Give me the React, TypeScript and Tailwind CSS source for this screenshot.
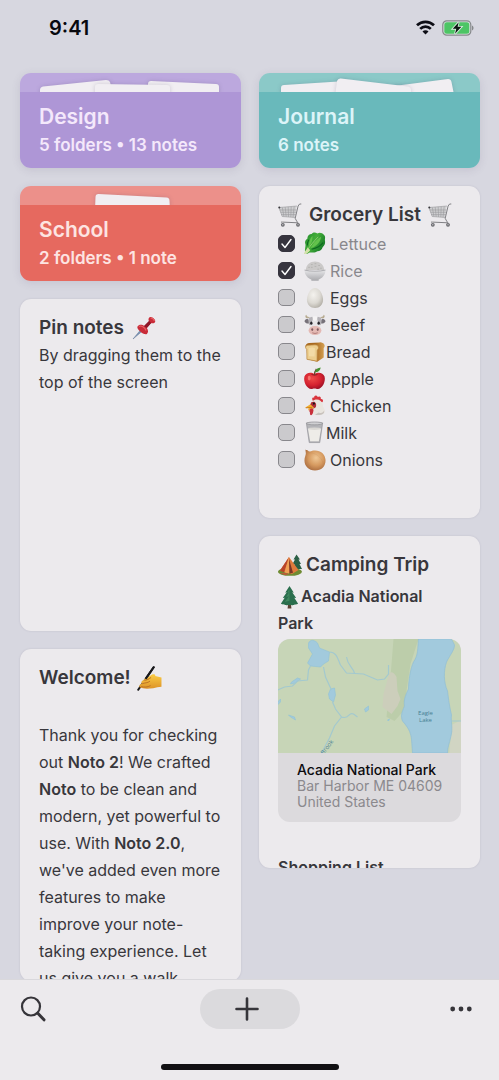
import type { ReactNode } from "react";

/* ---------- Emoji drawings ---------- */

function Glyph({ label, className, children }: { label: string; className: string; children: ReactNode }) {
  return (
    <svg viewBox="0 0 24 24" role="img" aria-label={label} className={`shrink-0 ${className}`}>
      {children}
    </svg>
  );
}

function Cart() {
  return (
    <Glyph label="Shopping cart" className="size-6">
      <path d="M1 4.5 18.6 3 17 14.5 4.2 13.5Z" fill="#cfcfd1" />
      <path
        d="M1 4.5 19 3M1.5 7h17M2.4 9.3h15.8M3 11.6h14.8M1 4.5l3.2 9 12.8 1M4.3 4.4l1.6 9M7.2 4.1l1 9.6M10.2 3.9l.3 10M13.2 3.6l-.4 10.4M16.2 3.3 15 14.3"
        fill="none"
        stroke="#99999c"
        strokeWidth=".6"
      />
      <path d="M23.3 1h-1.7l-1.5 2-2.9 12.3 1.4 2.7 1.4 1.800-15.500-.700H3" fill="none" stroke="#808084" strokeWidth="1" />
      <circle cx="4.8" cy="21.800" r="1.900" fill="#68686d" />
      <circle cx="20" cy="21.800" r="1.900" fill="#68686d" />
      <circle cx="4.8" cy="21.800" r=".7" fill="#c7c7ca" />
      <circle cx="20" cy="21.800" r=".7" fill="#c7c7ca" />
      <circle cx="1.300" cy="4.500" r="1" fill="#37373b" />
    </Glyph>
  );
}

function Lettuce() {
  return (
    <Glyph label="Lettuce" className="size-[23px]">
      <defs>
        <linearGradient id="leafShade" x1="0" x2="1" y1="0" y2=".6">
          <stop stopColor="#1f8a2c" />
          <stop offset=".5" stopColor="#45ae3a" />
          <stop offset="1" stopColor="#167a28" />
        </linearGradient>
      </defs>
      <path
        d="M2 20c0-3 .8-5 .6-7C1.500 10.500 2.500 8 4.500 7c0-3 2-5 4.500-5 2-2 4-1.500 6-.5 2.500-1.500 5-.5 7 1.500 2 2 .5 4 1 6.500.5 3-1 5-2.500 6.500-.8 3-3 4-5.500 4-2.500 2-6 1-8 1.500l-3 1.500Z"
        fill="url(#leafShade)"
      />
      <path d="M6 16c0-5 1-9 4-12 0 5-1 8-4 12ZM8 17c3-6 6-9 11-12-1 6-5 10-11 12Z" fill="#63c24c" />
      <path d="M9 18c4-1 9-3 12-7M4.500 14c0-2 .5-4 1.500-6" stroke="#0f6a20" strokeWidth="1.200" fill="none" />
      <path d="M1 22.500c1-2 2.500-4 4-6.500l2.500 3c-1.500 2-4 4-6 4Z" fill="#d3e0a8" />
      <path d="M5 18C8 14 11 10 16 5" stroke="#a6d880" strokeWidth=".8" fill="none" />
    </Glyph>
  );
}

function Rice() {
  return (
    <Glyph label="Rice" className="size-[22px]">
      <defs>
        <linearGradient id="bowlShade" y1="0" y2="1" x1="0" x2="0">
          <stop stopColor="#e6e6e8" />
          <stop offset="1" stopColor="#a9a9ad" />
        </linearGradient>
      </defs>
      <path d="M2 11C2 5 7 1.500 12 1.500S22 5 22 11Z" fill="#cbc9c8" />
      <path d="M5 8h1m2-3h1m3-1h1m3 2h1m1 3h1M8 8h1m3-1h1m2 3h1" stroke="#b4b2b0" strokeWidth="1" strokeLinecap="round" />
      <path d="M.6 11c6 1.600 16.800 1.600 22.800 0 0 6-4 9-7.400 10.300v1.200H8v-1.200C4.500 20 .6 17 .6 11Z" fill="url(#bowlShade)" />
      <path d="M.6 11c6 1.600 16.800 1.600 22.800 0" fill="none" stroke="#98989c" strokeWidth=".8" />
    </Glyph>
  );
}

function Egg() {
  return (
    <Glyph label="Egg" className="size-[22px]">
      <defs>
        <radialGradient id="eggShade" cx=".4" cy=".35" r=".7">
          <stop stopColor="#f4f2ee" />
          <stop offset=".6" stopColor="#dcd9d3" />
          <stop offset="1" stopColor="#b3afa7" />
        </radialGradient>
      </defs>
      <path d="M12 1c4.800 0 8.800 7 8.800 12.800 0 5.200-3.800 9-8.800 9s-8.800-3.800-8.800-9C3.200 8 7.200 1 12 1Z" fill="url(#eggShade)" />
    </Glyph>
  );
}

function Cow() {
  return (
    <Glyph label="Cow" className="size-[22px]">
      <path d="M3.500 5C1 4 1 1.500 2.500.7 3 3 5 3 7 3.500ZM20.500 5c2.500-1 2.500-3.500 1-4.300C21 3 19 3 17 3.500Z" fill="#b7ab91" />
      <path d="M6 7C3 4 1 6 .5 8c1 2.500 4 3 6 2ZM18 7c3-3 5-1 5.500 1-1 2.500-4 3-6 2Z" fill="#77727a" />
      <path d="M5 5c3-3 11-3 14 0l-.5 8-2 9h-9l-2-9Z" fill="#e8e6e8" />
      <path d="M5 5c2-2 4-2 5-2-1 5-1 9-4.500 9ZM19 5c-2-2-4-2-5-2 1 5 1 9 4.500 9Z" fill="#b5b2b7" />
      <path d="M9 2.500h6l-1 4-2 1-2-1Z" fill="#f5f3f4" />
      <ellipse cx="8" cy="10" rx="1.300" ry="1.700" fill="#252329" />
      <ellipse cx="16" cy="10" rx="1.300" ry="1.700" fill="#252329" />
      <ellipse cx="12" cy="18" rx="7" ry="5" fill="#e4b9b4" />
      <ellipse cx="9" cy="17" rx="1.100" ry="1.500" fill="#805b5e" />
      <ellipse cx="15" cy="17" rx="1.100" ry="1.500" fill="#805b5e" />
      <path d="M9 20.500q3 1.500 6 0" stroke="#ae7775" fill="none" />
    </Glyph>
  );
}

function Bread() {
  return (
    <Glyph label="Bread" className="size-[22px]">
      <defs>
        <linearGradient id="crustShade" x1="0" x2="1">
          <stop offset=".5" stopColor="#a8691f" />
          <stop offset="1" stopColor="#d6a355" />
        </linearGradient>
      </defs>
      <path d="M3 8C0 6 2 2.700 5.500 2.200L17 1.500c5-.3 7 4.200 4.500 6.200V18l-7 4.500L3.500 20Z" fill="url(#crustShade)" />
      <path d="M3 9C.5 7 2 4.600 5 4.600l7-.4c4 0 5 4 2.400 5.800l-.2 12-11-2Z" fill="#ecce8f" stroke="#bd8a45" strokeWidth=".8" />
      <path d="M5 8q4-2 7 0l-.5 9-6-.5Z" fill="#f3dba6" />
    </Glyph>
  );
}

function Apple() {
  return (
    <Glyph label="Apple" className="size-[23px]">
      <defs>
        <radialGradient id="appleShade" cx=".4" cy=".35" r=".7">
          <stop stopColor="#ef4b48" />
          <stop offset=".6" stopColor="#d52230" />
          <stop offset="1" stopColor="#990f25" />
        </radialGradient>
      </defs>
      <path d="M12 7.500C15 5 21 5.500 22.500 10c1.500 6-3 13-7 13-1.500 0-2-.5-3.500-.5s-2 .5-3.500.5c-4 0-8.500-7-7-13C3 5.500 9 5 12 7.500Z" fill="url(#appleShade)" />
      <path d="M8 8q4 1.500 8 0-2.500-1-4 0-1.500-1-4 0Z" fill="#8b1020" />
      <path d="M12 8.500c0-3 .5-4.500 2-6.500" stroke="#68452b" strokeWidth="1.300" fill="none" />
      <path d="M12.500 5.500C13 2 16 .8 18.500.5 18 4 15.500 5.700 12.500 5.500Z" fill="#439332" />
      <ellipse cx="6.500" cy="11.500" rx="1.500" ry="2.500" fill="#ff9186" opacity=".65" />
    </Glyph>
  );
}

function Chicken() {
  return (
    <Glyph label="Chicken" className="size-[22px]">
      <path d="M10 7C8 4 9 2 11 3c0-3 3-3 4-.7 2-1.700 4 .2 3.300 2 2.500-.3 3.200 2 1.700 3.700Z" fill="#d9343d" />
      <path d="M9 7c4-4 10-2 11.500 3-.5 4 4 6 1.500 10-4 3-9 2-13 1L6 12Z" fill="#e9e5df" />
      <path d="M16 19c3 1.500 5 0 6-2 .5 5-5 5.500-10 4.500Z" fill="#c9c2bd" />
      <path d="M8 8c4-2 6 1 5 5-3 3-6 2-7-1Z" fill="#ad2d38" />
      <path d="m7 10-6 4 4 .3L4.500 17 11 14Z" fill="#f1ae2d" />
      <path d="m2 14 7-.5" stroke="#c67b20" />
      <circle cx="10.800" cy="9.300" r="1.200" fill="#17151a" />
      <path d="M7 15c3-1 4 1 3 3.500-.5 4-4 5-3.500.5-1-1-1-3 .5-4Z" fill="#c82f3b" />
    </Glyph>
  );
}

function Milk() {
  return (
    <Glyph label="Milk" className="size-[23px]">
      <path d="M3.500 2h17l-3 20.500h-11Z" fill="#b4b4b8" stroke="#929297" strokeWidth=".7" />
      <path d="M5.200 8h13.600l-2.300 13h-9Z" fill="#eeece8" />
      <ellipse cx="12" cy="2.500" rx="8.300" ry="1.500" fill="#cfcfd2" stroke="#8d8d92" strokeWidth=".7" />
      <ellipse cx="12" cy="8" rx="6.800" ry="1.300" fill="#dad8d4" />
    </Glyph>
  );
}

function Onion() {
  return (
    <Glyph label="Onion" className="size-[22px]">
      <defs>
        <radialGradient id="onionShade" cx=".55" cy=".4" r=".65">
          <stop stopColor="#efc795" />
          <stop offset=".55" stopColor="#d69a60" />
          <stop offset="1" stopColor="#a86a3e" />
        </radialGradient>
      </defs>
      <path d="M1.500.5c1 1 2 0 2.500 1 1.500 1.500 3 1.300 5 .5 8-1.500 14 3 14.500 10 .3 7-4.500 11.500-11.500 11.500C5 23.500.5 18.500.5 12.500c0-4 1.500-5.500 1.500-8Z" fill="url(#onionShade)" />
      <path d="M3.500 4c-2 6 0 12 5 17M5 4c7 0 14 4 16 12" fill="none" stroke="#b97f4c" strokeWidth=".4" opacity=".5" />
    </Glyph>
  );
}

function Pushpin() {
  return (
    <Glyph label="Pushpin" className="size-6">
      <path d="m1 23 7.500-9 1.600 1.300Z" fill="#7b93b5" stroke="#627899" strokeWidth=".5" />
      <path d="M5.500 10.500c1.500-2.500 4.800-2 6.800-.6L17 5.300c-1-1.600-.5-3.500 1-4.200 2-1 6 2.800 5.200 4.600-.7 1.600-2.600 2-4.200 1.200L14.800 12c1.700 2.300 1.700 5-.3 6.200-2.500 1.200-10.500-5-9-7.700Z" fill="#c92b38" />
      <path d="m12 10 5-5 2.300 2-4.500 5Z" fill="#8e1728" />
      <path d="M7 10.500c2-1.500 6 1 7 4M18.500 2c2 0 3.500 1.500 4 3" stroke="#e55f63" strokeWidth="1.200" fill="none" />
    </Glyph>
  );
}

function WritingHand() {
  return (
    <Glyph label="Writing hand" className="size-[25px]">
      <defs>
        <linearGradient id="handShade" x1="0" x2="0" y1="0" y2="1">
          <stop stopColor="#fbcd45" />
          <stop offset="1" stopColor="#dd9429" />
        </linearGradient>
      </defs>
      <path d="M16 1.200 1.200 22.800" stroke="#19191c" strokeWidth="2" strokeLinecap="round" />
      <path
        d="M2.500 20.500c-1-2 .5-3.200 2-3.500-1-2 .5-3 2-3.500C7 12 9 11 10.500 10.800l4-2.600c1.500-.8 3.500-.2 3 1.300l6 1.500v9c-3 0-5 1-8 1.300-5 .7-10 .7-13-.8Z"
        fill="url(#handShade)"
      />
      <path d="M5 17c2.500-1 5-.5 7.500-2.500M7 13.700c2.500 0 4.500-1.200 6.500-2.700M4 19.800c3 .7 6 .7 9-1" fill="none" stroke="#b96e22" strokeWidth=".9" />
      <path d="M16 1.200 8.800 11.700" stroke="#19191c" strokeWidth="2" strokeLinecap="round" />
    </Glyph>
  );
}

function Tent() {
  return (
    <Glyph label="Camping" className="size-6">
      <path d="m18.500 1.500-3 5h1.500l-2.500 4.500h2L14 16h10l-2.500-5h1.500l-2.500-4.500H22Z" fill="#2b5f45" />
      <ellipse cx="12" cy="18.800" rx="12" ry="4" fill="#6f8b33" />
      <path d="M2 17.500 11 4l9.500 13-6.500 4Z" fill="#e07a3c" />
      <path d="m11 4-9 13.500 4 2Z" fill="#b8442c" />
      <path d="m11 4-4.500 15.500 4.500 1Z" fill="#f0a055" />
      <path d="m11 6 .5 14.500 3.500-.8Z" fill="#7a3627" />
      <path d="m2 20 5 2 4-.8-2.500-1Z" fill="#c9523a" />
    </Glyph>
  );
}

function Pine() {
  return (
    <Glyph label="Evergreen tree" className="size-[23px]">
      <path d="M10.500 19h3l.5 4.500h-4Z" fill="#5b4333" />
      <path d="m12 0-4.500 7 1.700-.4-4.200 6 2-.4L3 18.500c2 1.300 3 .3 4.500 1.300 1.800.6 3-.8 4.500.4 1.500-1.200 2.700.2 4.500-.4 1.500-1 2.500 0 4.500-1.300l-4-6.300 2 .4-4.200-6 1.700.4Z" fill="#2a6e4d" />
      <path d="M12 3 9.500 7l2-.5-3 5 3-.7-4.500 6 5-1.300Z" fill="#40875f" />
    </Glyph>
  );
}

/* ---------- Folders ---------- */

const PAPER = "fill-[#f1eef2] drop-shadow-[0_0_2px_rgba(60,50,90,0.2)]";

type FolderProps = {
  name: string;
  detail: string;
  tab: string;
  body: string;
  papers: string[];
};

function Folder({ name, detail, tab, body, papers }: FolderProps) {
  return (
    <a href="#folder" className="block overflow-hidden rounded-[11px] shadow-[0_2px_8px_rgba(90,80,110,0.14)]">
      <div className={tab}>
        <svg viewBox="0 0 221 19" className="block h-[19px] w-full" aria-hidden="true">
          {papers.map((d) => (
            <path key={d} d={d} className={PAPER} />
          ))}
        </svg>
      </div>
      <div className={`h-[76px] px-[19px] pt-[11px] ${body}`}>
        <h2 className="text-[21px] leading-7 font-semibold">{name}</h2>
        <p className="text-[17px] leading-7 font-semibold whitespace-nowrap">{detail}</p>
      </div>
    </a>
  );
}

/* ---------- Notes ---------- */

function Note({ children }: { children: ReactNode }) {
  return (
    <article className="h-[332px] shrink-0 overflow-hidden rounded-[11px] bg-[#eceaed] px-[19px] pt-[15px] shadow-[0_0_2px_rgba(90,80,110,0.2)]">
      {children}
    </article>
  );
}

const groceries = [
  { name: "Lettuce", icon: <Lettuce />, done: true, near: false },
  { name: "Rice", icon: <Rice />, done: true, near: false },
  { name: "Eggs", icon: <Egg />, done: false, near: false },
  { name: "Beef", icon: <Cow />, done: false, near: false },
  { name: "Bread", icon: <Bread />, done: false, near: true },
  { name: "Apple", icon: <Apple />, done: false, near: false },
  { name: "Chicken", icon: <Chicken />, done: false, near: false },
  { name: "Milk", icon: <Milk />, done: false, near: true },
  { name: "Onions", icon: <Onion />, done: false, near: false },
];

function GroceryRow({ item }: { item: (typeof groceries)[number] }) {
  return (
    <li>
      <label className={`flex h-[27px] items-center ${item.done ? "text-[#88878c]" : ""}`}>
        <span className="relative flex size-[17px] shrink-0">
          <input
            type="checkbox"
            defaultChecked={item.done}
            className="peer size-[17px] appearance-none rounded-[5px] border border-[#88878c] bg-[#cbcacd] checked:border-[#36343e] checked:bg-[#36343e]"
          />
          <svg
            viewBox="0 0 17 17"
            className="pointer-events-none absolute inset-0 hidden size-[17px] peer-checked:block"
            aria-hidden="true"
          >
            <path d="m4 9 3 3.500 6-8" fill="none" stroke="#fff" strokeWidth="1.400" strokeLinecap="round" strokeLinejoin="round" />
          </svg>
        </span>
        <span className="ml-2 flex w-[23px] justify-center">{item.icon}</span>
        <span className={item.near ? "" : "ml-1"}>{item.name}</span>
      </label>
    </li>
  );
}

function ParkMap() {
  return (
    <svg
      viewBox="0 0 184 114"
      preserveAspectRatio="xMidYMid slice"
      className="block h-[114px] w-full"
      role="img"
      aria-label="Map of Acadia National Park"
    >
      <path fill="#c7d5b7" d="M0 0h184v114H0z" />
      <path fill="#bccdaa" d="M116 0h25l-8 25-7 47-9 10-8-4 4-40Z" />
      <path fill="#cccebb" d="M112 34c2-2 5 0 7 4l1 14 3 8-3 7-6 8-5-4-4-3 1-13 3-11Z" />
      <path fill="#d1d5c3" d="m174 86 10-5v33h-12Z" />
      <path
        fill="#a2cadd"
        stroke="#91bed5"
        strokeWidth=".7"
        d="M141 0c-1 9 0 16-5 23-3 6-5 19-5 27-3 6-5 11-4 17-3 7-4 10-2 15 5 6 8 10 9 18l1 14h35c0-6 2-10 3-15 3-10 0-17 1-23-2-8-3-16-4-24-4-9-4-20-1-29 4-8 8-12 8-17l-3-6Z"
      />
      <path
        fill="#a2cadd"
        stroke="#91c2d7"
        strokeWidth=".6"
        d="M31 4c2-4 6-3 9 0l2 5 10 4-1 9-5 3-3 3-10-1-3-3 5-9-4-6ZM53 50l4-1 1 7-2 7-4-3-1-5ZM14 43l6-4 3 1-5 4-5 1ZM0 66l3-3v-3l-3 3ZM11 76l6 2 1 3-5-3ZM87 70l4-3v4l-3 2ZM110 81l2-1-1 2Z"
      />
      <path
        fill="none"
        stroke="#a3c9cf"
        strokeWidth="1.200"
        d="m0 51 7-3 8-1 5-5 10-1 1-10 2-4M46 28l2 10 6 13m1 12 3 7 6 8-7 9-5 12-8 15M64 78c8 3 7-6 12-3l4 3M52 13c7 0 8 6 11 13l6 8 17 1 14 6 7-1 4-5V26M69 18c1 8 6 10 8 16M174 82h10"
      />
      <g fontFamily="Open Sans, sans-serif" fill="#477f93">
        <text x="148" y="76" fontSize="6" textAnchor="middle">
          Eagle
        </text>
        <text x="148" y="83" fontSize="6" textAnchor="middle">
          Lake
        </text>
        <text x="46" y="116" fontSize="6" transform="rotate(-52 46 116)">
          Brook
        </text>
      </g>
    </svg>
  );
}

/* ---------- Bars ---------- */

function StatusBar() {
  return (
    <header className="flex h-[55px] shrink-0 items-center justify-between pr-[25px] pl-[49px]">
      <time className="text-[20px] leading-6 font-semibold text-[#08080e]">9:41</time>
      <div className="flex items-center gap-[7px]">
        <svg viewBox="0 0 19 15" className="h-[15px] w-[19px]" role="img" aria-label="Wi-Fi">
          <g fill="none" stroke="#0d0d15" strokeWidth="2.700">
            <path d="M1 5.300c4.800-4.700 12.200-4.700 17 0M4.200 8.900c3-3 7.600-3 10.600 0" />
          </g>
          <path d="m9.500 14.500-3-3c1.600-1.700 4.400-1.700 6 0Z" fill="#0d0d15" />
        </svg>
        <svg viewBox="0 0 32 16" className="h-4 w-8" role="img" aria-label="Battery charging">
          <rect x=".8" y=".8" width="28" height="14.400" rx="4" fill="#dde3e2" stroke="#85888a" strokeWidth="1.200" />
          <rect x="2.300" y="2.300" width="25" height="11.400" rx="2.500" fill="#4dc565" />
          <path d="M30 5.500c2 .8 2 4.200 0 5Z" fill="#85888a" />
          <path
            d="m16.700 2.200-6 6.600h3.600l-1.300 5 6.400-7h-3.800Z"
            fill="#0b1711"
            stroke="#d9ecdf"
            strokeWidth="1.800"
            paintOrder="stroke"
          />
        </svg>
      </div>
    </header>
  );
}

function Toolbar() {
  return (
    <footer className="flex h-[101px] shrink-0 flex-col items-center justify-between border-t border-[#d9d8dc] bg-[#eceaed] pt-[9px] pb-[10px] text-[#36353a]">
      <nav aria-label="Notes" className="grid w-full grid-cols-3 items-center px-5">
        <button type="button" aria-label="Search" className="justify-self-start">
          <svg viewBox="0 0 26 26" className="size-[26px]" fill="none" stroke="currentColor" strokeLinecap="round">
            <circle cx="11" cy="10.500" r="9" strokeWidth="2.200" />
            <path d="m17.800 17.300 6.200 6.500" strokeWidth="3" />
          </svg>
        </button>
        <button
          type="button"
          aria-label="New note"
          className="flex h-10 w-[100px] items-center justify-center justify-self-center rounded-full bg-[#dbdadd] pr-[6px]"
        >
          <svg viewBox="0 0 24 24" className="size-6" fill="none" stroke="currentColor" strokeWidth="2.600" strokeLinecap="round">
            <path d="M12 1.500v21M1.500 12h21" />
          </svg>
        </button>
        <button type="button" aria-label="More" className="mr-[7px] justify-self-end">
          <svg viewBox="0 0 22 6" className="h-[6px] w-[22px]" fill="currentColor">
            <circle cx="2.700" cy="3" r="2.400" />
            <circle cx="11" cy="3" r="2.400" />
            <circle cx="19.300" cy="3" r="2.400" />
          </svg>
        </button>
      </nav>
      <div className="h-[6px] w-[178px] rounded-full bg-[#111013]" />
    </footer>
  );
}

export default function App() {
  return (
    <div className="flex h-screen flex-col bg-[#d7d7e0] font-['Inter','Liberation_Sans',sans-serif] text-[#38373c]">
      <StatusBar />
      <main className="grid min-h-0 flex-1 grid-cols-2 items-start gap-[18px] overflow-y-auto pt-[18px] pr-[19px] pl-5 [scrollbar-width:none]">
        <div className="flex min-w-0 flex-col gap-[18px]">
          <Folder
            name="Design"
            detail="5 folders • 13 notes"
            tab="bg-[#bca8de]"
            body="bg-[#ae96d6] text-[#f4e8fb]"
            papers={[
              "M20 24V17q0-3 3-3.500L86 7q3 0 4 2l4 15Z",
              "M128 24V11q0-3 3-3l65 3q3 0 3 3v10Z",
              "M75 24V14q0-3 3-3l69 1q3 0 3 3v9Z",
            ]}
          />
          <Folder
            name="School"
            detail="2 folders • 1 note"
            tab="bg-[#ec908a]"
            body="bg-[#e6695f] text-[#fde4e2]"
            papers={["M75 24 75.500 11q0-3 3-3l68 3.500q3 0 3 3.500l.5 9Z"]}
          />
          <Note>
            <h2 className="flex items-center gap-2 text-[19px] leading-7 font-semibold">
              Pin notes <Pushpin />
            </h2>
            <p className="text-base leading-[27px]">By dragging them to the top of the screen</p>
          </Note>
          <Note>
            <h2 className="flex items-center gap-[6px] text-[19px] leading-7 font-semibold">
              Welcome! <WritingHand />
            </h2>
            <p className="mt-[30px] text-base leading-[27px]">
              Thank you for checking out <strong className="font-semibold">Noto 2</strong>! We crafted{" "}
              <strong className="font-semibold">Noto</strong> to be clean and modern, yet powerful to use. With{" "}
              <strong className="font-semibold">Noto 2.0</strong>, we've added even more features to make improve your
              note-taking experience. Let us give you a walk
            </p>
          </Note>
        </div>
        <div className="flex min-w-0 flex-col gap-[18px]">
          <Folder
            name="Journal"
            detail="6 notes"
            tab="bg-[#8bc9c8]"
            body="bg-[#69b9bb] text-[#dcf4f8]"
            papers={[
              "M22 24V15q0-3 3-3l62-4 4 16Z",
              "M135 24v-11l54-7q3 0 3.500 3l3 15Z",
              "M76 24 78 8q1-3 4-2.500l67 8q3 .5 3 3.500v7Z",
            ]}
          />
          <Note>
            <h2 className="flex items-center gap-[7px] text-[19px] leading-7 font-semibold whitespace-nowrap">
              <Cart /> Grocery List <Cart />
            </h2>
            <ul className="mt-px text-base">
              {groceries.map((item) => (
                <GroceryRow key={item.name} item={item} />
              ))}
            </ul>
          </Note>
          <Note>
            <h2 className="flex items-center gap-1 text-[19px] leading-7 font-semibold whitespace-nowrap">
              <Tent /> Camping Trip
            </h2>
            <h3 className="mt-1 text-base leading-[27px] font-semibold">
              <span className="inline-block align-middle">
                <Pine />
              </span>
              Acadia National Park
            </h3>
            <a href="#park" className="mt-[2px] block overflow-hidden rounded-xl bg-[#dcdadd]">
              <ParkMap />
              <div className="h-[69px] px-[19px] pt-[9px] text-sm leading-4 text-[#8b898d]">
                <p className="font-medium whitespace-nowrap text-[#0c0b0e]">Acadia National Park</p>
                <p className="whitespace-nowrap">Bar Harbor ME 04609</p>
                <p>United States</p>
              </div>
            </a>
            <h3 className="mt-8 text-base leading-[27px] font-semibold">Shopping List</h3>
          </Note>
        </div>
      </main>
      <Toolbar />
    </div>
  );
}
